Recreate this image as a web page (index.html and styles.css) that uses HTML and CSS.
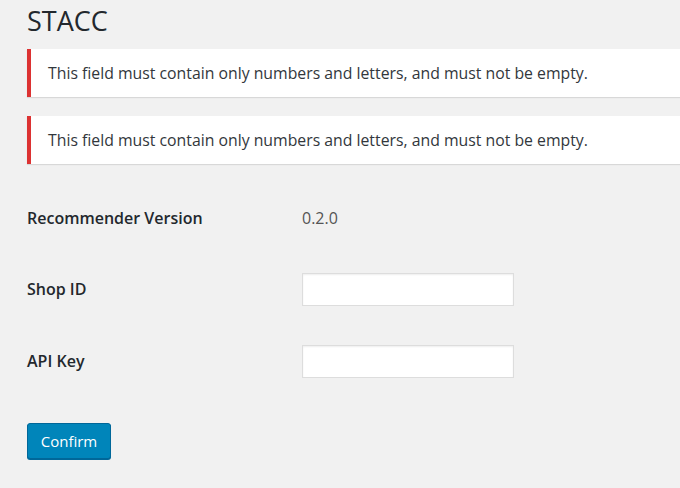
FILE: index.html
```html
<!DOCTYPE html>
<html>
<head>
<meta charset="utf-8">
<link rel="stylesheet" href="styles.css">
</head>
<body>
<div class="wrap">
  <h1 class="title">STACC</h1>
  <div class="notice">This field must contain only numbers and letters, and must not be empty.</div>
  <div class="notice">This field must contain only numbers and letters, and must not be empty.</div>
  <div class="form">
    <div class="row">
      <div class="label">Recommender Version</div>
      <div class="value">0.2.0</div>
    </div>
    <div class="row">
      <div class="label">Shop ID</div>
      <div class="value"><input class="field" type="text"></div>
    </div>
    <div class="row">
      <div class="label">API Key</div>
      <div class="value"><input class="field" type="text"></div>
    </div>
  </div>
  <button class="btn">Confirm</button>
</div>
</body>
</html>
```
FILE: styles.css
```css
html, body { margin: 0; padding: 0; }
body {
  background: #f1f1f1;
  font-family: "Open Sans", "Noto Sans", sans-serif;
  color: #23282d;
  width: 680px;
  height: 488px;
  overflow: hidden;
}
.wrap {
  padding: 0 0 0 27px;
  display: flex;
  flex-direction: column;
  align-items: flex-start;
}
.title {
  margin: 4px 0 0;
  font-size: 27px;
  font-weight: 400;
  line-height: 34px;
  height: 45px;
  color: #23282d;
}
.notice {
  align-self: stretch;
  box-sizing: border-box;
  height: 48px;
  background: #fff;
  border-left: 4px solid #dc3232;
  box-shadow: 0 1px 1px rgba(0,0,0,.1);
  padding: 0 0 0 17px;
  display: flex;
  align-items: center;
  font-size: 15.8px;
  color: #32373c;
  margin-bottom: 19px;
}
.form {
  margin-top: 16px;
  display: flex;
  flex-direction: column;
}
.row {
  display: flex;
  align-items: center;
  height: 72px;
}
.row:first-child { height: 37px; margin-bottom: 17px; }
.label {
  width: 275px;
  font-size: 16px;
  font-weight: 600;
  color: #23282d;
}
.value {
  font-size: 16px;
  color: #555;
}
.field {
  box-sizing: border-box;
  width: 212px;
  height: 33px;
  margin: 0;
  border: 1px solid #ddd;
  box-shadow: inset 0 1px 2px rgba(0,0,0,.07);
  background: #fff;
  display: block;
}
.btn {
  margin-top: 26px;
  box-sizing: border-box;
  width: 84px;
  height: 36px;
  background: #0085ba;
  border: 1px solid #006799;
  border-radius: 3px;
  box-shadow: 0 1px 0 #006799;
  color: #fff;
  font-family: "Open Sans", "Noto Sans", sans-serif;
  font-size: 15px;
  padding: 0;
}
```
